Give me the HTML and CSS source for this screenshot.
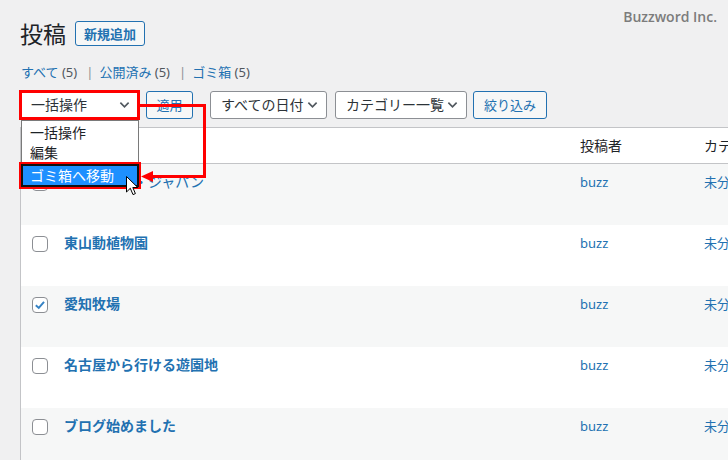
FILE: index.html
```html
<!DOCTYPE html>
<html lang="ja">
<head>
<meta charset="utf-8">
<title>投稿</title>
<link rel="stylesheet" href="styles.css">
</head>
<body>
<div class="page">
  <div class="brand">Buzzword Inc.</div>

  <div class="heading">
    <h1 class="title">投稿</h1>
    <a class="btn-add">新規追加</a>
  </div>

  <ul class="subsub">
    <li><a class="lnk">すべて <span class="count">(5)</span></a><span class="sep">|</span></li>
    <li><a class="lnk">公開済み <span class="count">(5)</span></a><span class="sep">|</span></li>
    <li><a class="lnk">ゴミ箱 <span class="count">(5)</span></a></li>
  </ul>

  <div class="tablenav">
    <div class="bulk">
      <div class="select sel-bulk hl"><span>一括操作</span><svg class="chev" viewBox="0 0 12 8"><path d="M1.5 1.5 L6 6 L10.5 1.5"/></svg></div>
      <div class="dropdown">
        <div class="opt">一括操作</div>
        <div class="opt">編集</div>
        <div class="opt opt-active">ゴミ箱へ移動</div>
      </div>
    </div>
    <button class="btn btn-apply">適用</button>
    <div class="select sel-date"><span>すべての日付</span><svg class="chev" viewBox="0 0 12 8"><path d="M1.5 1.5 L6 6 L10.5 1.5"/></svg></div>
    <div class="select sel-cat"><span>カテゴリー一覧</span><svg class="chev" viewBox="0 0 12 8"><path d="M1.5 1.5 L6 6 L10.5 1.5"/></svg></div>
    <button class="btn btn-filter">絞り込み</button>
  </div>

  <div class="table">
    <div class="row row-head">
      <div class="cell c-check"><span class="cb"></span></div>
      <div class="cell c-title head-txt">タイトル</div>
      <div class="cell c-author head-txt">投稿者</div>
      <div class="cell c-cat head-txt">カテゴリー</div>
    </div>
    <div class="row alt">
      <div class="cell c-check"><span class="cb"></span></div>
      <div class="cell c-title"><a class="post-title thin">レゴランド・ジャパン</a></div>
      <div class="cell c-author"><a class="meta">buzz</a></div>
      <div class="cell c-cat"><a class="meta">未分類</a></div>
    </div>
    <div class="row">
      <div class="cell c-check"><span class="cb"></span></div>
      <div class="cell c-title"><a class="post-title">東山動植物園</a></div>
      <div class="cell c-author"><a class="meta">buzz</a></div>
      <div class="cell c-cat"><a class="meta">未分類</a></div>
    </div>
    <div class="row alt">
      <div class="cell c-check"><span class="cb checked"><svg viewBox="0 0 16 16"><path d="M3.2 8.2 L6.6 11.4 L12.6 4.4"/></svg></span></div>
      <div class="cell c-title"><a class="post-title">愛知牧場</a></div>
      <div class="cell c-author"><a class="meta">buzz</a></div>
      <div class="cell c-cat"><a class="meta">未分類</a></div>
    </div>
    <div class="row">
      <div class="cell c-check"><span class="cb"></span></div>
      <div class="cell c-title"><a class="post-title">名古屋から行ける遊園地</a></div>
      <div class="cell c-author"><a class="meta">buzz</a></div>
      <div class="cell c-cat"><a class="meta">未分類</a></div>
    </div>
    <div class="row alt">
      <div class="cell c-check"><span class="cb"></span></div>
      <div class="cell c-title"><a class="post-title">ブログ始めました</a></div>
      <div class="cell c-author"><a class="meta">buzz</a></div>
      <div class="cell c-cat"><a class="meta">未分類</a></div>
    </div>
  </div>

  <svg class="annot" viewBox="0 0 728 460" width="728" height="460">
    <polyline points="140,105.5 204.5,105.5 204.5,176.5 151,176.5" fill="none" stroke="#ff0000" stroke-width="3"/>
    <polygon points="141,176.5 153,171 153,182" fill="#ff0000"/>
  </svg>

  <svg class="cursor" viewBox="0 0 13 20" width="13" height="20">
    <path d="M0.5 0.5 L0.5 16 L4.3 12.3 L7 18.6 L9.4 17.6 L6.8 11.5 L11.8 11.5 Z" fill="#ffffff" stroke="#000000" stroke-width="1" stroke-linejoin="miter"/>
  </svg>
</div>
</body>
</html>
```

FILE: styles.css
```css
html, body {
  margin: 0;
  padding: 0;
  overflow: hidden;
  background: #f0f0f1;
}

body {
  width: 728px;
  height: 460px;
  font-family: "Noto Sans", "Noto Sans CJK JP", sans-serif;
  color: #1d2327;
  font-size: 13px;
}

.page {
  position: relative;
  width: 708px;
  height: 460px;
  padding-left: 20px;
}

.brand {
  position: absolute;
  top: 7px;
  right: 11px;
  font-family: "Open Sans", "Noto Sans", sans-serif;
  font-weight: 600;
  font-size: 14px;
  line-height: 20px;
  color: #7c7c7c;
}

.heading {
  display: flex;
  align-items: center;
  gap: 9px;
  padding-top: 21px;
  height: 25px;
}

.title {
  margin: 0;
  font-size: 23px;
  font-weight: 400;
  line-height: 25px;
  color: #1d2327;
  font-family: "Noto Sans CJK JP", sans-serif;
}

.btn-add {
  display: inline-block;
  height: 23px;
  line-height: 23px;
  padding: 0 8px;
  border: 1px solid #2271b1;
  border-radius: 3px;
  background: #f6f7f7;
  color: #2271b1;
  font-size: 13px;
  font-weight: 700;
  font-family: "Noto Sans CJK JP", sans-serif;
}

.subsub {
  list-style: none;
  margin: 16px 0 0 0;
  padding: 0 0 0 1px;
  display: flex;
  height: 20px;
  line-height: 20px;
  font-size: 13px;
  white-space: nowrap;
}

.lnk {
  color: #2271b1;
  text-decoration: none;
}

.count {
  color: #50575e;
  font-family: "Noto Sans", sans-serif;
}

.sep {
  color: #8c8f94;
  margin: 0 6px 0 9px;
}

.tablenav {
  display: flex;
  align-items: center;
  margin-top: 9px;
  height: 28px;
  white-space: nowrap;
}

.bulk {
  position: relative;
}

.select {
  box-sizing: border-box;
  display: flex;
  align-items: center;
  justify-content: space-between;
  height: 28px;
  padding: 0 8px 0 10px;
  background: #ffffff;
  border: 1px solid #8c8f94;
  border-radius: 3px;
  font-size: 14px;
  color: #2c3338;
  line-height: 20px;
}

.chev {
  width: 11px;
  height: 8px;
  flex: none;
  fill: none;
  stroke: #50575e;
  stroke-width: 1.8;
}

.sel-bulk {
  width: 119px;
}

.hl {
  outline: 3px solid #ff0000;
  outline-offset: -2px;
  border-radius: 0;
}

.sel-date {
  width: 117px;
  margin-left: 17px;
}

.sel-cat {
  width: 132px;
  margin-left: 8px;
}

.btn {
  box-sizing: border-box;
  height: 28px;
  padding: 0;
  text-align: center;
  white-space: nowrap;
  border: 1px solid #2271b1;
  border-radius: 3px;
  background: #f6f7f7;
  color: #2271b1;
  font-size: 13px;
  font-family: "Noto Sans CJK JP", sans-serif;
  line-height: 20px;
}

.btn-apply {
  width: 47px;
  margin-left: 7px;
}

.btn-filter {
  width: 74px;
  margin-left: 6px;
}

.dropdown {
  position: absolute;
  z-index: 5;
  left: 1px;
  top: 29px;
  width: 118px;
  box-sizing: border-box;
  background: #ffffff;
  border: 1px solid #7a7a7a;
  padding: 2px 0 1px 0;
  font-size: 14px;
  color: #1d2327;
  white-space: nowrap;
}

.opt {
  height: 20px;
  line-height: 20px;
  padding-left: 8px;
}

.opt-active {
  box-sizing: border-box;
  height: 23px;
  line-height: 19px;
  margin: 1px -1px 0 -1px;
  padding-left: 7px;
  background: #1e90ff;
  color: #ffffff;
  border: 2px solid #111111;
  outline: 2px solid #ff0000;
}

.table {
  margin-top: 8px;
  width: 760px;
  background: #ffffff;
  border-top: 1px solid #c3c4c7;
  border-left: 1px solid #c3c4c7;
}

.row {
  display: grid;
  grid-template-columns: 33px 516px 124px 1fr;
  height: 61px;
  background: #ffffff;
  white-space: nowrap;
}

.row.alt {
  background: #f6f7f7;
}

.row-head {
  height: 35px;
  border-bottom: 1px solid #c3c4c7;
  background: #ffffff;
}

.cell {
  padding: 8px 10px 0 10px;
  line-height: 20px;
  font-size: 14px;
  overflow: hidden;
}

.c-check {
  padding: 11px 0 0 11px;
}

.row-head .c-check {
  padding-top: 10px;
}

.head-txt {
  color: #1d2327;
  font-size: 14px;
}

.cb {
  display: block;
  box-sizing: border-box;
  width: 16px;
  height: 16px;
  border: 1px solid #8c8f94;
  border-radius: 4px;
  background: #ffffff;
}

.cb svg {
  display: block;
  width: 14px;
  height: 14px;
  fill: none;
  stroke: #3582c4;
  stroke-width: 2.2;
}

.post-title {
  color: #2271b1;
  font-weight: 700;
  font-size: 14px;
  text-decoration: none;
}

.post-title.thin {
  font-weight: 400;
}

.meta {
  color: #2271b1;
  font-size: 13px;
  text-decoration: none;
}

.annot {
  position: absolute;
  left: 0;
  top: 0;
  z-index: 8;
  pointer-events: none;
}

.cursor {
  position: absolute;
  left: 126px;
  top: 176px;
  z-index: 9;
}
```
